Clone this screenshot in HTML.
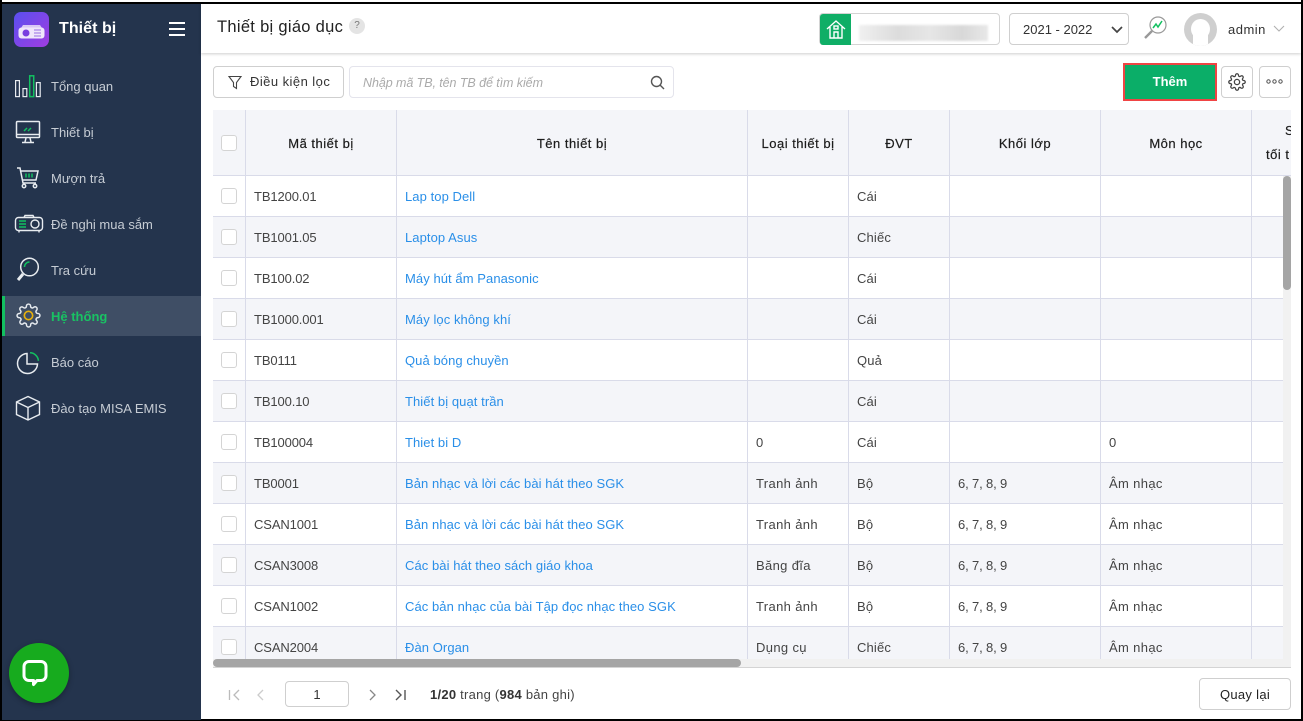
<!DOCTYPE html>
<html lang="vi"><head><meta charset="utf-8"><title>Thiết bị giáo dục</title>
<style>
*{box-sizing:border-box}
html,body{margin:0;padding:0;width:1303px;height:721px;overflow:hidden;background:#fff;font-family:"Liberation Sans","Noto Sans CJK SC",sans-serif;font-size:13px;color:#3a3a3a}
.a{position:absolute;white-space:nowrap}
#root{position:relative;width:1303px;height:721px;overflow:hidden}
#side{position:absolute;left:2px;top:4px;width:199px;height:716px;background:#24344d}
.m{position:absolute;left:51px;color:#c6ccd4;font-size:13px;line-height:20px;white-space:nowrap}
.r{position:absolute;left:213px;width:1070px;height:41px;border-bottom:1px solid #d9dbe9}
.g{background:#f4f5f9}
.cb{position:absolute;left:221px;width:16px;height:16px;border:1px solid #d4d4d4;border-radius:3px;background:#fff}
.t{position:absolute;margin-top:1px;line-height:20px;white-space:nowrap;letter-spacing:.35px;color:#444}
.t[style*="left:254px"]{letter-spacing:-.12px}
.t[style*="left:958px"]{letter-spacing:-.15px}
.t[style*="left:857px"]{letter-spacing:.15px}
.l{color:#2a8fe8;letter-spacing:.07px}
.v{position:absolute;top:110px;width:1px;height:549px;background:#d9dbe9}
.h{position:absolute;top:133px;margin-top:1px;line-height:20px;color:#1c1c1c;text-align:center;letter-spacing:.5px;white-space:nowrap;-webkit-text-stroke:.2px #1c1c1c}
.btn{position:absolute;border:1px solid #cfcfcf;border-radius:4px;background:#fff}
svg{position:absolute;overflow:visible}
</style></head><body><div id="root">

<div class="a" style="left:0;top:0;width:1303px;height:2px;background:#fff"></div>
<div class="a" style="left:0;top:2px;width:1303px;height:2px;background:#000"></div>
<div class="a" style="left:0;top:0;width:2px;height:721px;background:#000"></div>
<div class="a" style="left:1301px;top:0;width:2px;height:721px;background:#000"></div>
<div class="a" style="left:0;top:719px;width:1303px;height:2px;background:#000"></div>

<div id="side"></div>
<div class="a" style="left:14px;top:12px;width:35px;height:35px;border-radius:7px;background:linear-gradient(135deg,#5a4ff0,#a03de0)"></div>
<svg style="left:14px;top:12px" width="35" height="35"><path d="M9 13h17l2 3H7z" fill="#d9c8f5"/><rect x="4.500" y="15.500" width="26" height="11" rx="3" fill="#efe6fb"/><circle cx="12" cy="21" r="3.500" fill="#7a3fe0"/><path d="M20 18h7M20 21h7M20 24h7" stroke="#a987e8" stroke-width="1.200"/></svg>
<div class="a" style="left:59px;top:18px;color:#fff;font-size:16px;font-weight:bold;line-height:22px;letter-spacing:.05px">Thiết bị</div>
<div class="a" style="left:169px;top:22px;width:16px;height:2px;background:#fff"></div>
<div class="a" style="left:169px;top:28px;width:16px;height:2px;background:#fff"></div>
<div class="a" style="left:169px;top:34px;width:16px;height:2px;background:#fff"></div>

<div class="a" style="left:2px;top:296px;width:199px;height:40px;background:#3f4e65"></div>
<div class="a" style="left:2px;top:296px;width:3px;height:40px;background:#12c060"></div>

<div class="m" style="top:77px">Tổng quan</div>
<div class="m" style="top:123px">Thiết bị</div>
<div class="m" style="top:169px">Mượn trả</div>
<div class="m" style="top:215px">Đề nghị mua sắm</div>
<div class="m" style="top:261px">Tra cứu</div>
<div class="m" style="top:307px;color:#19c263;font-weight:bold">Hệ thống</div>
<div class="m" style="top:353px">Báo cáo</div>
<div class="m" style="top:399px">Đào tạo MISA EMIS</div>

<svg style="left:15px;top:75px" width="26" height="22" fill="none" stroke="#e8ecf0" stroke-width="1.200"><rect x=".6" y="5.600" width="3.800" height="16"/><rect x="8" y="13.600" width="3.800" height="8"/><rect x="14.700" y=".8" width="4" height="20.800" stroke="#12c060" stroke-width="1.500"/><rect x="21.400" y="7.600" width="3.800" height="14"/></svg>
<svg style="left:15px;top:120px" width="26" height="24" fill="none" stroke="#e8ecf0" stroke-width="1.500"><rect x="1.500" y="1.500" width="23" height="16" rx="1"/><path d="M1.500 14.500h23M11 18l-1 4M15 18l1 4M7 22.500h12"/><path d="M9 11l3-3M13 11l3-3" stroke="#12c060"/></svg>
<svg style="left:16px;top:166px" width="24" height="24" fill="none" stroke="#e8ecf0" stroke-width="1.500"><path d="M1 2h3l3 15h13M5 5h17l-2 9H7"/><circle cx="8" cy="20" r="1.700"/><circle cx="19" cy="20" r="1.700"/><path d="M10 7.500v4M13 7.500v4M16 7.500v4" stroke="#12c060"/></svg>
<svg style="left:14px;top:214px" width="30" height="20" fill="none" stroke="#e8ecf0" stroke-width="1.400"><rect x="1.500" y="3.500" width="27" height="13" rx="3"/><path d="M10 3.500l1-2h8l1 2M5 16.500v2M25 16.500v2"/><circle cx="21" cy="10" r="4"/><path d="M5 7h7M5 10h7M5 13h7" stroke="#12c060" stroke-width="1.500"/></svg>
<svg style="left:15px;top:257px" width="26" height="26" fill="none" stroke="#e8ecf0" stroke-width="1.500"><circle cx="14.500" cy="10" r="8.800"/><path d="M8 17l-5 6" stroke-width="3"/><path d="M9.500 10a5 5 0 0 1 5-5" stroke="#12c060"/></svg>
<svg style="left:15.500px;top:303px" width="25" height="25" viewBox="0 0 24 24" fill="none" stroke="#e8ecf0" stroke-width="1.400"><path d="M19.400 15a1.650 1.650 0 0 0 .33 1.820l.06.06a2 2 0 0 1 0 2.830 2 2 0 0 1-2.830 0l-.06-.06a1.650 1.650 0 0 0-1.820-.33 1.650 1.650 0 0 0-1 1.510V21a2 2 0 0 1-2 2 2 2 0 0 1-2-2v-.09A1.650 1.650 0 0 0 9 19.400a1.650 1.650 0 0 0-1.820.33l-.06.06a2 2 0 0 1-2.830 0 2 2 0 0 1 0-2.830l.06-.06a1.650 1.650 0 0 0 .33-1.820 1.650 1.650 0 0 0-1.510-1H3a2 2 0 0 1-2-2 2 2 0 0 1 2-2h.09A1.650 1.650 0 0 0 4.600 9a1.650 1.650 0 0 0-.33-1.820l-.06-.06a2 2 0 0 1 0-2.830 2 2 0 0 1 2.830 0l.06.06a1.650 1.650 0 0 0 1.820.33H9a1.650 1.650 0 0 0 1-1.510V3a2 2 0 0 1 2-2 2 2 0 0 1 2 2v.09a1.650 1.650 0 0 0 1 1.510 1.650 1.650 0 0 0 1.820-.33l.06-.06a2 2 0 0 1 2.830 0 2 2 0 0 1 0 2.830l-.06.06a1.650 1.650 0 0 0-.33 1.820V9a1.650 1.650 0 0 0 1.510 1H21a2 2 0 0 1 2 2 2 2 0 0 1-2 2h-.09a1.650 1.650 0 0 0-1.510 1z"/><circle cx="12" cy="12" r="4" stroke="#e8b10e" stroke-width="1.600"/></svg>
<svg style="left:16px;top:350px" width="24" height="24" fill="none" stroke="#e8ecf0" stroke-width="1.500"><path d="M11 3.500a10 10 0 1 0 10.500 10.500H11z"/><path d="M14 2.800a8.500 8.500 0 0 1 8.400 8" stroke="#12c060"/></svg>
<svg style="left:15px;top:395px" width="26" height="26" fill="none" stroke="#e8ecf0" stroke-width="1.400"><path d="M13 1.500L24.500 7v12.500L13 25 1.500 19.500V7zM1.500 7L13 12.500 24.500 7M13 12.500V25"/></svg>

<div class="a" style="left:9px;top:643px;width:60px;height:60px;border-radius:50%;background:#17ab1e;box-shadow:0 2px 6px rgba(0,0,0,.3)"></div>
<svg style="left:22px;top:658px" width="26" height="30" fill="none" stroke="#fff" stroke-width="3"><path d="M7 3.500h12a5 5 0 0 1 5 5v9a5 5 0 0 1-5 5h-4l-3.500 4v-4H7a5 5 0 0 1-5-5v-9a5 5 0 0 1 5-5z" stroke-linejoin="round"/></svg>

<div class="a" style="left:201px;top:4px;width:1100px;height:49px;background:#fff;box-shadow:0 1px 3px rgba(0,0,0,.2)"></div>
<div class="a" style="left:217px;top:15px;font-size:16.500px;line-height:24px;color:#222;letter-spacing:.3px">Thiết bị giáo dục</div>
<div class="a" style="left:349px;top:18px;width:16px;height:16px;border-radius:50%;background:#e4e4e4;color:#777;font-size:10px;line-height:16px;text-align:center">?</div>

<div class="btn" style="left:819px;top:13px;width:181px;height:32px;border-color:#d4d4d4"></div>
<div class="a" style="left:820px;top:14px;width:31px;height:31px;background:#0fae66;border-radius:3px 0 0 3px"></div>
<svg style="left:826px;top:19px" width="20" height="20" fill="none" stroke="#fff" stroke-width="1.400"><path d="M1 10L10 2l9 8M4 8v11h12V8M8 19v-6h4v6"/><rect x="8" y="7" width="4" height="3"/></svg>
<div class="a" style="left:859px;top:25px;width:129px;height:16px;background:linear-gradient(90deg,#f0f0f0,#dcdcdc 30%,#e6e6e6 55%,#d8d8d8 80%,#e8e8e8);filter:blur(1px)"></div>

<div class="btn" style="left:1009px;top:13px;width:120px;height:32px;border-color:#cfcfcf"></div>
<div class="a" style="left:1023px;top:20px;line-height:20px;color:#333">2021 - 2022</div>
<svg style="left:1111px;top:26px" width="12" height="8" fill="none" stroke="#444" stroke-width="1.700"><path d="M1 1l5 5 5-5"/></svg>

<svg style="left:1142px;top:15px" width="26" height="26" fill="none" stroke="#999" stroke-width="1.200"><circle cx="16" cy="10" r="8"/><path d="M10 16l-7 7" stroke-width="2.400"/><path d="M11 13l3-4 2 3 4-6" stroke="#12c060" stroke-width="1.500"/></svg>

<div class="a" style="left:1184px;top:13px;width:33px;height:33px;border-radius:50%;background:#cfcfcf;overflow:hidden"><div style="position:absolute;left:7px;top:6px;width:19px;height:20px;border-radius:50%;background:#fff"></div><div style="position:absolute;left:9px;top:20px;width:15px;height:13px;background:#fff"></div></div>
<div class="a" style="left:1228px;top:20px;line-height:20px;color:#333;letter-spacing:.5px">admin</div>
<svg style="left:1273px;top:25px" width="12" height="7" fill="none" stroke="#b0b0b0" stroke-width="1.100"><path d="M1 1l5 5 5-5"/></svg>

<div class="btn" style="left:213px;top:66px;width:131px;height:32px"></div>
<svg style="left:228px;top:75px" width="15" height="15" fill="none" stroke="#444" stroke-width="1.100"><path d="M1 1.500h12L8.500 7.500v6l-3-2v-4z"/></svg>
<div class="a" style="left:250px;top:72px;line-height:20px;color:#333;letter-spacing:.45px">Điều kiện lọc</div>
<div class="btn" style="left:349px;top:66px;width:325px;height:32px;border-color:#e4e4ec"></div>
<div class="a" style="left:363px;top:73px;line-height:20px;color:#aaa;font-style:italic;font-size:12.500px;letter-spacing:-.07px">Nhập mã TB, tên TB để tìm kiếm</div>
<svg style="left:650px;top:75px" width="15" height="15" fill="none" stroke="#555" stroke-width="1.400"><circle cx="6.500" cy="6.500" r="5"/><path d="M10 10l4 4"/></svg>

<div class="a" style="left:1123px;top:63px;width:94px;height:38px;background:#0bae68;border:2px solid #f04444"></div>
<div class="a" style="left:1123px;top:72px;width:94px;text-align:center;color:#fff;font-weight:bold;line-height:20px">Thêm</div>
<div class="btn" style="left:1221px;top:66px;width:32px;height:32px"></div>
<svg style="left:1228px;top:73px" width="18" height="18" viewBox="0 0 24 24" fill="none" stroke="#444" stroke-width="1.700"><path d="M19.400 15a1.650 1.650 0 0 0 .33 1.820l.06.06a2 2 0 0 1 0 2.830 2 2 0 0 1-2.830 0l-.06-.06a1.650 1.650 0 0 0-1.820-.33 1.650 1.650 0 0 0-1 1.510V21a2 2 0 0 1-2 2 2 2 0 0 1-2-2v-.09A1.650 1.650 0 0 0 9 19.400a1.650 1.650 0 0 0-1.820.33l-.06.06a2 2 0 0 1-2.830 0 2 2 0 0 1 0-2.830l.06-.06a1.650 1.650 0 0 0 .33-1.820 1.650 1.650 0 0 0-1.510-1H3a2 2 0 0 1-2-2 2 2 0 0 1 2-2h.09A1.650 1.650 0 0 0 4.600 9a1.650 1.650 0 0 0-.33-1.820l-.06-.06a2 2 0 0 1 0-2.830 2 2 0 0 1 2.830 0l.06.06a1.650 1.650 0 0 0 1.820.33H9a1.650 1.650 0 0 0 1-1.510V3a2 2 0 0 1 2-2 2 2 0 0 1 2 2v.09a1.650 1.650 0 0 0 1 1.510 1.650 1.650 0 0 0 1.820-.33l.06-.06a2 2 0 0 1 2.830 0 2 2 0 0 1 0 2.830l-.06.06a1.650 1.650 0 0 0-.33 1.820V9a1.650 1.650 0 0 0 1.510 1H21a2 2 0 0 1 2 2 2 2 0 0 1-2 2h-.09a1.650 1.650 0 0 0-1.510 1z"/><circle cx="12" cy="12" r="3.500"/></svg>
<div class="btn" style="left:1259px;top:66px;width:32px;height:32px"></div>
<svg style="left:1266px;top:79px" width="18" height="5" fill="none" stroke="#555" stroke-width="1"><circle cx="2.500" cy="2.500" r="1.700"/><circle cx="8.500" cy="2.500" r="1.700"/><circle cx="14.500" cy="2.500" r="1.700"/></svg>

<div class="a" style="left:213px;top:110px;width:1078px;height:66px;background:#f4f5f9;border-bottom:1px solid #d9dbe9"></div>
<div class="r" style="top:176px"></div>
<div class="r g" style="top:217px"></div>
<div class="r" style="top:258px"></div>
<div class="r g" style="top:299px"></div>
<div class="r" style="top:340px"></div>
<div class="r g" style="top:381px"></div>
<div class="r" style="top:422px"></div>
<div class="r g" style="top:463px"></div>
<div class="r" style="top:504px"></div>
<div class="r g" style="top:545px"></div>
<div class="r" style="top:586px"></div>
<div class="r g" style="top:627px;height:32px;border-bottom:0"></div>

<div class="v" style="left:245px"></div>
<div class="v" style="left:396px"></div>
<div class="v" style="left:747px"></div>
<div class="v" style="left:848px"></div>
<div class="v" style="left:949px"></div>
<div class="v" style="left:1100px"></div>
<div class="v" style="left:1251px"></div>

<div class="cb" style="top:135px"></div>
<div class="h" style="left:246px;width:150px">Mã thiết bị</div>
<div class="h" style="left:397px;width:350px">Tên thiết bị</div>
<div class="h" style="left:748px;width:100px">Loại thiết bị</div>
<div class="h" style="left:849px;width:100px">ĐVT</div>
<div class="h" style="left:950px;width:150px">Khối lớp</div>
<div class="h" style="left:1101px;width:150px">Môn học</div>
<div class="a" style="left:1252px;top:110px;width:39px;height:64px;overflow:hidden">
<div class="h" style="left:33px;top:10px;text-align:left">S</div>
<div class="h" style="left:14px;top:34px;text-align:left">tối t</div></div>

<div class="cb" style="top:188px"></div><div class="t" style="left:254px;top:186px">TB1200.01</div><div class="t l" style="left:405px;top:186px">Lap top Dell</div><div class="t" style="left:857px;top:186px">Cái</div>
<div class="cb" style="top:229px"></div><div class="t" style="left:254px;top:227px">TB1001.05</div><div class="t l" style="left:405px;top:227px">Laptop Asus</div><div class="t" style="left:857px;top:227px">Chiếc</div>
<div class="cb" style="top:270px"></div><div class="t" style="left:254px;top:268px">TB100.02</div><div class="t l" style="left:405px;top:268px">Máy hút ẩm Panasonic</div><div class="t" style="left:857px;top:268px">Cái</div>
<div class="cb" style="top:311px"></div><div class="t" style="left:254px;top:309px">TB1000.001</div><div class="t l" style="left:405px;top:309px">Máy lọc không khí</div><div class="t" style="left:857px;top:309px">Cái</div>
<div class="cb" style="top:352px"></div><div class="t" style="left:254px;top:350px">TB0111</div><div class="t l" style="left:405px;top:350px">Quả bóng chuyền</div><div class="t" style="left:857px;top:350px">Quả</div>
<div class="cb" style="top:393px"></div><div class="t" style="left:254px;top:391px">TB100.10</div><div class="t l" style="left:405px;top:391px">Thiết bị quạt trần</div><div class="t" style="left:857px;top:391px">Cái</div>
<div class="cb" style="top:434px"></div><div class="t" style="left:254px;top:432px">TB100004</div><div class="t l" style="left:405px;top:432px">Thiet bi D</div><div class="t" style="left:756px;top:432px">0</div><div class="t" style="left:857px;top:432px">Cái</div><div class="t" style="left:1109px;top:432px">0</div>
<div class="cb" style="top:475px"></div><div class="t" style="left:254px;top:473px">TB0001</div><div class="t l" style="left:405px;top:473px">Bản nhạc và lời các bài hát theo SGK</div><div class="t" style="left:756px;top:473px">Tranh ảnh</div><div class="t" style="left:857px;top:473px">Bộ</div><div class="t" style="left:958px;top:473px">6, 7, 8, 9</div><div class="t" style="left:1109px;top:473px">Âm nhạc</div>
<div class="cb" style="top:516px"></div><div class="t" style="left:254px;top:514px">CSAN1001</div><div class="t l" style="left:405px;top:514px">Bản nhạc và lời các bài hát theo SGK</div><div class="t" style="left:756px;top:514px">Tranh ảnh</div><div class="t" style="left:857px;top:514px">Bộ</div><div class="t" style="left:958px;top:514px">6, 7, 8, 9</div><div class="t" style="left:1109px;top:514px">Âm nhạc</div>
<div class="cb" style="top:557px"></div><div class="t" style="left:254px;top:555px">CSAN3008</div><div class="t l" style="left:405px;top:555px">Các bài hát theo sách giáo khoa</div><div class="t" style="left:756px;top:555px">Băng đĩa</div><div class="t" style="left:857px;top:555px">Bộ</div><div class="t" style="left:958px;top:555px">6, 7, 8, 9</div><div class="t" style="left:1109px;top:555px">Âm nhạc</div>
<div class="cb" style="top:598px"></div><div class="t" style="left:254px;top:596px">CSAN1002</div><div class="t l" style="left:405px;top:596px">Các bản nhạc của bài Tập đọc nhạc theo SGK</div><div class="t" style="left:756px;top:596px">Tranh ảnh</div><div class="t" style="left:857px;top:596px">Bộ</div><div class="t" style="left:958px;top:596px">6, 7, 8, 9</div><div class="t" style="left:1109px;top:596px">Âm nhạc</div>
<div class="cb" style="top:639px"></div><div class="t" style="left:254px;top:637px">CSAN2004</div><div class="t l" style="left:405px;top:637px">Đàn Organ</div><div class="t" style="left:756px;top:637px">Dụng cụ</div><div class="t" style="left:857px;top:637px">Chiếc</div><div class="t" style="left:958px;top:637px">6, 7, 8, 9</div><div class="t" style="left:1109px;top:637px">Âm nhạc</div>

<div class="a" style="left:1283px;top:176px;width:8px;height:491px;background:#f1f1f1"></div>
<div class="a" style="left:1283px;top:176px;width:8px;height:114px;border-radius:4px;background:#a5a5a5"></div>
<div class="a" style="left:213px;top:659px;width:1070px;height:8px;background:#f1f1f1"></div>
<div class="a" style="left:213px;top:659px;width:528px;height:8px;border-radius:4px;background:#a5a5a5"></div>
<div class="a" style="left:213px;top:667px;width:1078px;height:1px;background:#d4d4d4"></div>

<svg style="left:228px;top:689px" width="13" height="12" fill="none" stroke="#bbb" stroke-width="1.300"><path d="M1.500 1v10M11 1L6 6l5 5"/></svg>
<svg style="left:255px;top:689px" width="10" height="12" fill="none" stroke="#ccc" stroke-width="1.300"><path d="M8 1L3 6l5 5"/></svg>
<div class="btn" style="left:285px;top:681px;width:64px;height:26px"></div>
<div class="a" style="left:285px;top:685px;width:64px;text-align:center;line-height:20px;color:#333">1</div>
<svg style="left:368px;top:689px" width="10" height="12" fill="none" stroke="#888" stroke-width="1.300"><path d="M2 1l5 5-5 5"/></svg>
<svg style="left:394px;top:689px" width="13" height="12" fill="none" stroke="#555" stroke-width="1.400"><path d="M2 1l5 5-5 5M11 1v10"/></svg>
<div class="a" style="left:430px;top:685px;line-height:20px;color:#444;letter-spacing:.25px"><b style="color:#333">1/20</b> trang (<b style="color:#333">984</b> bản ghi)</div>
<div class="btn" style="left:1199px;top:678px;width:92px;height:32px"></div>
<div class="a" style="left:1199px;top:685px;width:92px;text-align:center;line-height:20px;color:#222;letter-spacing:.3px">Quay lại</div>

</div></body></html>
